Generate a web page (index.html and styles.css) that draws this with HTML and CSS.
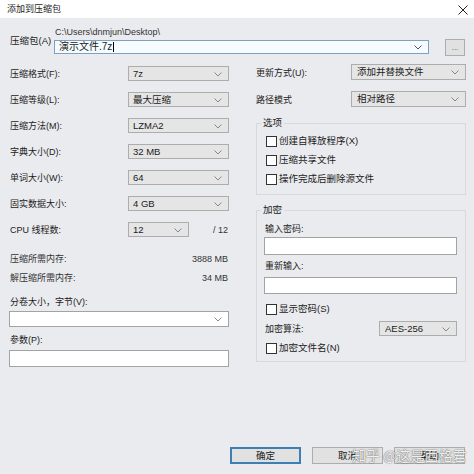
FILE: index.html
```html
<!DOCTYPE html>
<html lang="zh-CN">
<head>
<meta charset="utf-8">
<title>添加到压缩包</title>
<link rel="stylesheet" href="styles.css">
</head>
<body>
<div class="window">
  <div class="titlebar">
    <span class="title">添加到压缩包</span>
    <svg class="close" width="10" height="10" viewBox="0 0 10 10"><path d="M0.5 0.5 L9.5 9.5 M9.5 0.5 L0.5 9.5" stroke="#222" stroke-width="1" fill="none"/></svg>
  </div>
  <div class="body">
    <div class="archive">
      <span class="archive-lbl">压缩包(A)</span>
      <div class="archive-main">
        <div class="path">C:\Users\dnmjun\Desktop\</div>
        <div class="combo edit focus"><span class="val">演示文件.7z</span><span class="caret"></span><svg class="chev" width="8" height="5" viewBox="0 0 8 5"><path d="M0.5 0.5 L4 4 L7.5 0.5" stroke="#555" fill="none"/></svg></div>
      </div>
      <div class="btn browse">...</div>
    </div>

    <div class="cols">
      <div class="left">
        <div class="row"><span>压缩格式(F):</span><div class="combo"><span class="val">7z</span><svg class="chev" width="8" height="5" viewBox="0 0 8 5"><path d="M0.5 0.5 L4 4 L7.5 0.5" stroke="#888" fill="none"/></svg></div></div>
        <div class="row"><span>压缩等级(L):</span><div class="combo"><span class="val">最大压缩</span><svg class="chev" width="8" height="5" viewBox="0 0 8 5"><path d="M0.5 0.5 L4 4 L7.5 0.5" stroke="#888" fill="none"/></svg></div></div>
        <div class="row"><span>压缩方法(M):</span><div class="combo"><span class="val">LZMA2</span><svg class="chev" width="8" height="5" viewBox="0 0 8 5"><path d="M0.5 0.5 L4 4 L7.5 0.5" stroke="#888" fill="none"/></svg></div></div>
        <div class="row"><span>字典大小(D):</span><div class="combo"><span class="val">32 MB</span><svg class="chev" width="8" height="5" viewBox="0 0 8 5"><path d="M0.5 0.5 L4 4 L7.5 0.5" stroke="#888" fill="none"/></svg></div></div>
        <div class="row"><span>单词大小(W):</span><div class="combo"><span class="val">64</span><svg class="chev" width="8" height="5" viewBox="0 0 8 5"><path d="M0.5 0.5 L4 4 L7.5 0.5" stroke="#888" fill="none"/></svg></div></div>
        <div class="row"><span>固实数据大小:</span><div class="combo"><span class="val">4 GB</span><svg class="chev" width="8" height="5" viewBox="0 0 8 5"><path d="M0.5 0.5 L4 4 L7.5 0.5" stroke="#888" fill="none"/></svg></div></div>
        <div class="row"><span>CPU 线程数:</span><div class="cpu"><div class="combo small"><span class="val">12</span><svg class="chev" width="8" height="5" viewBox="0 0 8 5"><path d="M0.5 0.5 L4 4 L7.5 0.5" stroke="#888" fill="none"/></svg></div><span class="of">/ 12</span></div></div>
        <div class="mem first"><span>压缩所需内存:</span><span>3888 MB</span></div>
        <div class="mem"><span>解压缩所需内存:</span><span>34 MB</span></div>
        <div class="lbl vol-lbl">分卷大小，字节(V):</div>
        <div class="combo edit wide"><span class="val"></span><svg class="chev" width="8" height="5" viewBox="0 0 8 5"><path d="M0.5 0.5 L4 4 L7.5 0.5" stroke="#888" fill="none"/></svg></div>
        <div class="lbl par-lbl">参数(P):</div>
        <div class="input par"></div>
      </div>

      <div class="right">
        <div class="rrow"><span>更新方式(U):</span><div class="combo rcombo"><span class="val">添加并替换文件</span><svg class="chev" width="8" height="5" viewBox="0 0 8 5"><path d="M0.5 0.5 L4 4 L7.5 0.5" stroke="#888" fill="none"/></svg></div></div>
        <div class="rrow second"><span>路径模式</span><div class="combo rcombo"><span class="val">相对路径</span><svg class="chev" width="8" height="5" viewBox="0 0 8 5"><path d="M0.5 0.5 L4 4 L7.5 0.5" stroke="#888" fill="none"/></svg></div></div>

        <fieldset class="group opts">
          <legend>选项</legend>
          <div class="gbody">
            <label class="check"><span class="box"></span>创建自释放程序(X)</label>
            <label class="check"><span class="box"></span>压缩共享文件</label>
            <label class="check"><span class="box"></span>操作完成后删除源文件</label>
          </div>
        </fieldset>

        <fieldset class="group enc">
          <legend>加密</legend>
          <div class="gbody">
            <div class="lbl pw1">输入密码:</div>
            <div class="input pw"></div>
            <div class="lbl pw2">重新输入:</div>
            <div class="input pw pwb"></div>
            <label class="check show"><span class="box"></span>显示密码(S)</label>
            <div class="algo"><span>加密算法:</span><div class="combo acombo"><span class="val">AES-256</span><svg class="chev" width="8" height="5" viewBox="0 0 8 5"><path d="M0.5 0.5 L4 4 L7.5 0.5" stroke="#888" fill="none"/></svg></div></div>
            <label class="check encname"><span class="box"></span>加密文件名(N)</label>
          </div>
        </fieldset>
      </div>
    </div>

    <div class="buttons">
      <div class="btn dlg default">确定</div>
      <div class="btn dlg">取消</div>
      <div class="btn dlg">帮助</div>
      <div class="watermark">知乎 @这是西格君</div>
    </div>
  </div>
</div>
</body>
</html>
```

FILE: styles.css
```css
* { box-sizing: border-box; }
html, body { margin: 0; padding: 0; }
body {
  width: 474px;
  height: 474px;
  overflow: hidden;
  font-family: "Liberation Sans", "Noto Sans CJK SC", sans-serif;
  font-size: 9px;
  color: #1b1b1b;
  background: #eaebef;
}
.window { width: 474px; height: 474px; display: flex; flex-direction: column; }
.titlebar {
  height: 18px;
  background: #ffffff;
  display: flex;
  align-items: center;
  justify-content: space-between;
  padding: 0 6px 0 7px;
}
.title { font-size: 9px; line-height: 12px; }
.close { display: block; margin-top: 1px; }

.body {
  flex: 1;
  display: flex;
  flex-direction: column;
  padding: 0 8px 10px 9px;
  background: #eaebef;
}

/* archive row */
.archive { display: flex; align-items: flex-start; height: 38px; padding-top: 8px; }
.archive-lbl { width: 45px; padding-left: 1px; margin-top: 9px; line-height: 12px; font-size: 9.5px; }
.archive-main { width: 375px; }
.path { line-height: 12px; height: 12px; font-size: 9px; padding-left: 1px; color: #333; }
.archive .combo { margin-top: 2px; height: 14px; width: 375px; font-size: 10px; }
.browse { width: 20px; height: 17px; margin-left: 16px; margin-top: 13px; font-size: 8px; line-height: 10px; color: #555; }

/* generic controls */
.combo {
  position: relative;
  height: 15px;
  background: #e5e5e5;
  border: 1px solid #adadad;
  display: flex;
  align-items: center;
  padding-left: 4px;
  line-height: 12px;
  font-size: 9.5px;
}
.combo .chev { position: absolute; right: 6px; top: 50%; margin-top: -2px; }
.combo.edit { background: #ffffff; border-color: #a3a3a3; }
.combo.focus { background: #f6fbff; border-color: #7da2c1; }
.caret { display: inline-block; width: 1px; height: 10px; background: #000; margin-left: 1px; }
.input { background: #ffffff; border: 1px solid #a3a3a3; }
.btn {
  background: #e1e1e1;
  border: 1px solid #adadad;
  display: flex;
  align-items: center;
  justify-content: center;
}

/* columns */
.cols { display: grid; grid-template-columns: 220px 211px; column-gap: 26px; margin-top: 8px; }
.left { display: flex; flex-direction: column; padding-top: 2px; }
.row {
  display: flex;
  justify-content: space-between;
  align-items: center;
  height: 15px;
  margin-bottom: 11px;
  padding-left: 1px;
}
.row:nth-child(7) { margin-bottom: 0; }
.row .combo { width: 101px; }
.cpu { display: flex; align-items: center; width: 101px; justify-content: space-between; }
.combo.small { width: 61px; }
.of { color: #333; padding-right: 1px; }
.mem {
  display: flex;
  justify-content: space-between;
  height: 14px;
  line-height: 14px;
  margin-top: 5px;
  padding: 0 1px;
  color: #333;
}
.mem.first { margin-top: 15px; }
.lbl { height: 14px; line-height: 14px; padding-left: 1px; }
.vol-lbl { margin-top: 10px; }
.combo.wide { height: 16px; margin-top: 2px; }
.par-lbl { margin-top: 6px; }
.input.par { height: 17px; margin-top: 3px; }

/* right column */
.right { display: flex; flex-direction: column; }
.rrow { display: flex; justify-content: space-between; align-items: center; height: 16px; }
.rrow.second { margin-top: 11px; }
.rrow span { padding-left: 1px; }
.rcombo { width: 115px; height: 16px; }

.group {
  margin: 9px 0 0 1px;
  padding: 0;
  border: 1px solid #d8d9dd;
  min-width: 0;
}
.group legend {
  padding: 0 2px;
  margin-left: 4px;
  height: 14px;
  line-height: 14px;
  font-size: 9.5px;
}
.gbody { display: flex; flex-direction: column; padding: 0 8px 0 7px; }
.opts .gbody { padding-left: 9px; padding-bottom: 8px; }
.check { display: flex; align-items: center; height: 14px; line-height: 14px; margin-top: 5px; font-size: 9.5px; }
.opts .check:first-child { margin-top: 4px; }
.box {
  width: 11px;
  height: 11px;
  background: #ffffff;
  border: 1px solid #333333;
  margin-right: 2px;
  flex: none;
}
.enc { margin-top: 8px; }
.enc .gbody { padding-bottom: 6px; }
.pw1 { margin-top: 5px; }
.input.pw { height: 18px; margin-top: 1px; }
.pw2 { margin-top: 4px; }
.input.pwb { height: 17px; margin-top: 4px; }
.check.show { margin-top: 8px; margin-left: 2px; }
.check.encname { margin-top: 5px; margin-left: 2px; }
.algo { display: flex; justify-content: space-between; align-items: center; height: 15px; margin-top: 5px; }
.algo span { padding-left: 1px; }
.acombo { width: 78px; }

/* buttons */
.buttons {
  position: relative;
  margin-top: auto;
  display: flex;
  justify-content: flex-end;
  gap: 11px;
  padding-right: 1px;
}
.btn.dlg { width: 71px; height: 17px; line-height: 12px; font-size: 9.5px; }
.btn.default { border: 2px solid #3d7fb3; }
.watermark {
  position: absolute;
  left: 343px;
  top: -2px;
  font-family: "Noto Sans CJK SC", sans-serif;
  font-size: 14px;
  line-height: 20px;
  color: rgba(255, 255, 255, 0.92);
  text-shadow: 0 0 1.5px rgba(0, 0, 0, 0.55), 0 0 1px rgba(0, 0, 0, 0.4);
  white-space: nowrap;
  pointer-events: none;
}
```
